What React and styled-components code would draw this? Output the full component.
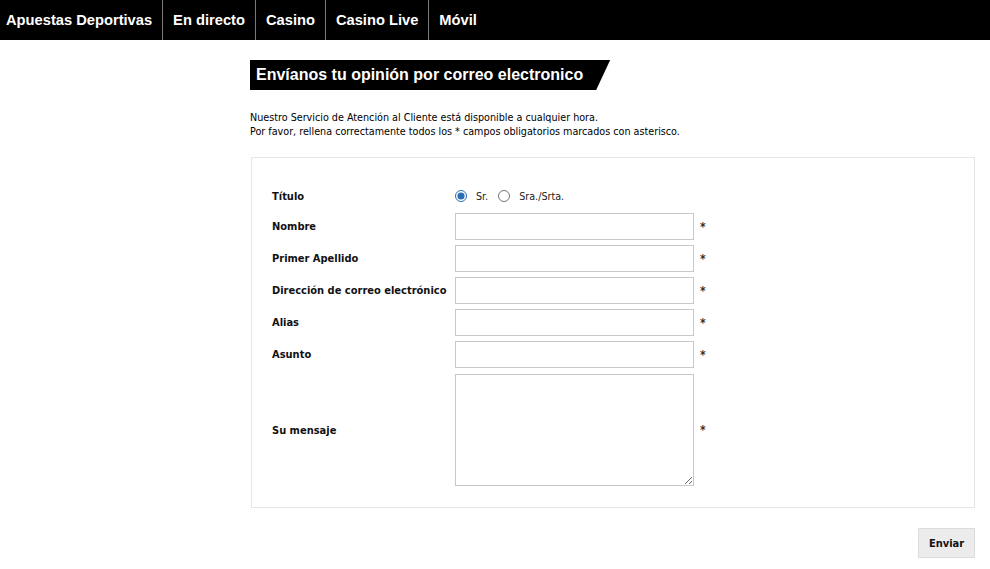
import React, { useState } from 'react'
import styled, { createGlobalStyle } from 'styled-components'

const GlobalStyle = createGlobalStyle`
  html, body {
    margin: 0;
    padding: 0;
    background: #fff;
  }
  body {
    font-family: "DejaVu Sans Condensed", "DejaVu Sans", sans-serif;
    font-size: 10.7px;
    color: #000;
  }
`

const NavBar = styled.nav`
  display: flex;
  height: 40px;
  background: #000;
`

const NavItem = styled.a`
  display: flex;
  align-items: center;
  padding: 0 10px;
  font-family: "Liberation Sans", Arial, sans-serif;
  font-weight: bold;
  font-size: 14.7px;
  color: #fff;
  text-decoration: none;
  border-right: 1px solid #7a7a7a;
  &:first-child {
    padding-left: 6px;
  }
  &:last-child {
    border-right: none;
  }
`

const Main = styled.main`
  width: 725px;
  margin-left: 250px;
  padding-top: 20px;
`

const Banner = styled.h1`
  display: inline-block;
  margin: 0;
  height: 30px;
  line-height: 30px;
  padding: 0 27px 0 6px;
  background: #000;
  color: #fff;
  font-family: "Liberation Sans", Arial, sans-serif;
  font-size: 16px;
  font-weight: bold;
  clip-path: polygon(0 0, 100% 0, calc(100% - 14px) 100%, 0 100%);
`

const Intro = styled.p`
  margin: 21px 0 18px;
  line-height: 14px;
`

const FormBox = styled.form`
  margin-left: 1px;
  border: 1px solid #e6e6e6;
  padding: 26px 20px 21px 20px;
  display: flex;
  flex-direction: column;
  gap: 5px;
`

const Row = styled.div`
  display: grid;
  grid-template-columns: 183px 239px auto;
  align-items: center;
  min-height: ${({ $compact }) => ($compact ? '24px' : '27px')};
`

const Label = styled.label`
  font-size: 11px;
  font-weight: bold;
  color: #111;
  padding-top: ${({ $low }) => ($low ? '2px' : '0')};
`

const Field = styled.input`
  box-sizing: border-box;
  width: 239px;
  height: 27px;
  border: 1px solid #c8c8c8;
  margin: 0;
  font: inherit;
`

const Message = styled.textarea`
  box-sizing: border-box;
  width: 239px;
  height: 112px;
  border: 1px solid #c8c8c8;
  margin: 1px 0 0;
  font: inherit;
  resize: both;
`

const Required = styled.span`
  padding-left: 6px;
  font-weight: bold;
  color: #333;
  font-size: 12px;
`

const Radios = styled.div`
  display: flex;
  align-items: center;
  color: #222;
`

const Radio = styled.input`
  margin: 0 9px 0 ${({ $first }) => ($first ? '0' : '10px')};
  width: 12px;
  height: 12px;
  accent-color: #2a6db5;
`

const Footer = styled.div`
  display: flex;
  justify-content: flex-end;
  padding-top: 20px;
`

const SubmitButton = styled.button`
  width: 57px;
  height: 30px;
  background: #ececec;
  border: 1px solid #dcdcdc;
  font-family: inherit;
  font-size: 11px;
  font-weight: bold;
  color: #111;
  cursor: pointer;
`

const fields = [
  { name: 'nombre', label: 'Nombre' },
  { name: 'apellido', label: 'Primer Apellido' },
  { name: 'email', label: 'Dirección de correo electrónico' },
  { name: 'alias', label: 'Alias' },
  { name: 'asunto', label: 'Asunto' },
]

export default function App() {
  const [title, setTitle] = useState('sr')

  return (
    <>
      <GlobalStyle />
      <NavBar>
        <NavItem href="#">Apuestas Deportivas</NavItem>
        <NavItem href="#">En directo</NavItem>
        <NavItem href="#">Casino</NavItem>
        <NavItem href="#">Casino Live</NavItem>
        <NavItem href="#">Móvil</NavItem>
      </NavBar>
      <Main>
        <Banner>Envíanos tu opinión por correo electronico</Banner>
        <Intro>
          Nuestro Servicio de Atención al Cliente está disponible a cualquier hora.
          <br />
          Por favor, rellena correctamente todos los * campos obligatorios marcados con asterisco.
        </Intro>
        <FormBox onSubmit={(e) => e.preventDefault()}>
          <Row $compact>
            <Label>Título</Label>
            <Radios>
              <Radio $first type="radio" name="title" checked={title === 'sr'} onChange={() => setTitle('sr')} />
              <span>Sr.</span>
              <Radio type="radio" name="title" checked={title === 'sra'} onChange={() => setTitle('sra')} />
              <span>Sra./Srta.</span>
            </Radios>
          </Row>
          {fields.map((f) => (
            <Row key={f.name}>
              <Label htmlFor={f.name}>{f.label}</Label>
              <Field id={f.name} type="text" />
              <Required>*</Required>
            </Row>
          ))}
          <Row>
            <Label $low htmlFor="mensaje">Su mensaje</Label>
            <Message id="mensaje" />
            <Required>*</Required>
          </Row>
        </FormBox>
        <Footer>
          <SubmitButton type="submit">Enviar</SubmitButton>
        </Footer>
      </Main>
    </>
  )
}
